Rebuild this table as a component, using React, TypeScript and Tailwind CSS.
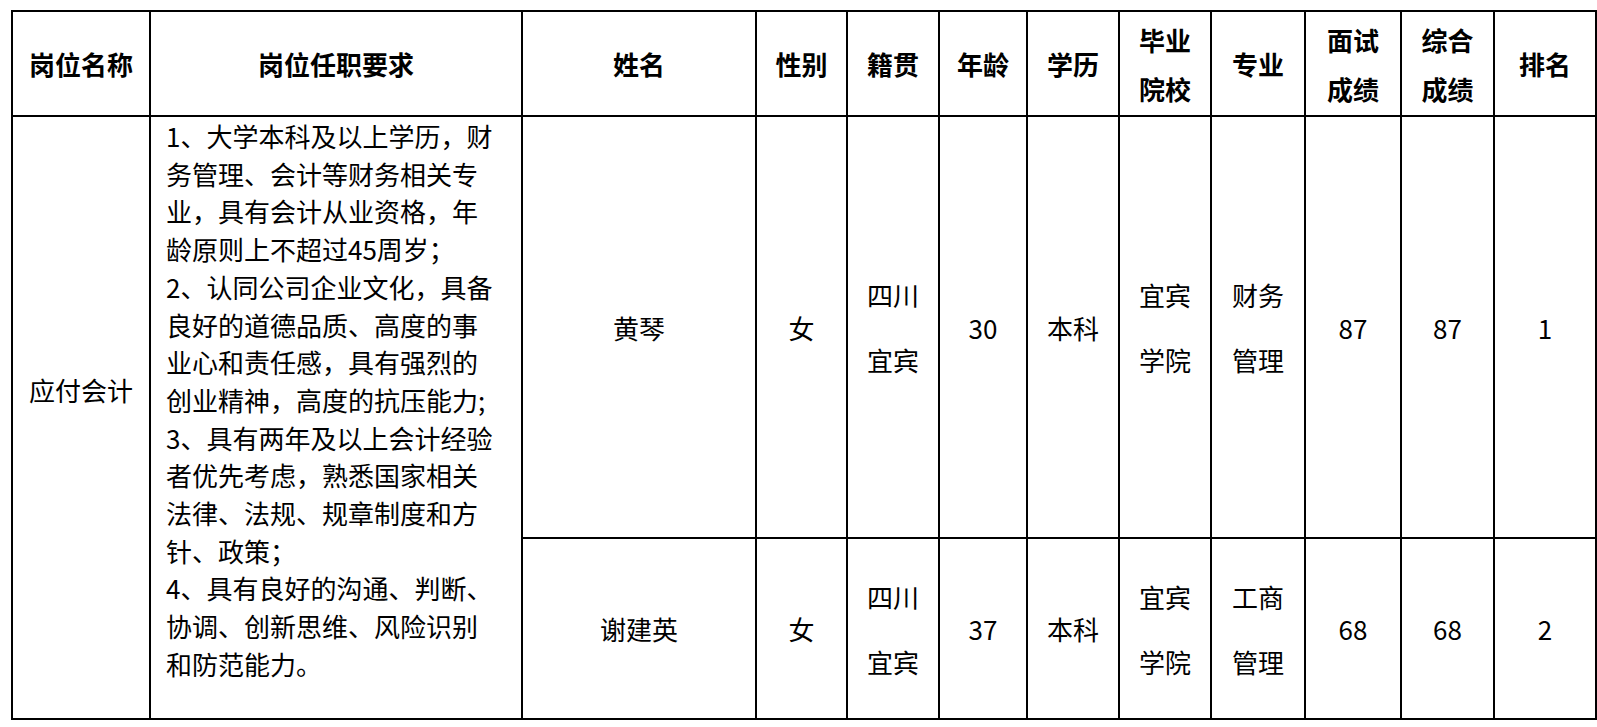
import React from "react";

const req = [
  "1、大学本科及以上学历，财",
  "务管理、会计等财务相关专",
  "业，具有会计从业资格，年",
  "龄原则上不超过45周岁；",
  "2、认同公司企业文化，具备",
  "良好的道德品质、高度的事",
  "业心和责任感，具有强烈的",
  "创业精神，高度的抗压能力;",
  "3、具有两年及以上会计经验",
  "者优先考虑，熟悉国家相关",
  "法律、法规、规章制度和方",
  "针、政策；",
  "4、具有良好的沟通、判断、",
  "协调、创新思维、风险识别",
  "和防范能力。",
];

type Row = {
  name: string;
  sex: string;
  origin: [string, string];
  age: string;
  edu: string;
  school: [string, string];
  major: [string, string];
  interview: string;
  total: string;
  rank: string;
};

const rows: Row[] = [
  {
    name: "黄琴",
    sex: "女",
    origin: ["四川", "宜宾"],
    age: "30",
    edu: "本科",
    school: ["宜宾", "学院"],
    major: ["财务", "管理"],
    interview: "87",
    total: "87",
    rank: "1",
  },
  {
    name: "谢建英",
    sex: "女",
    origin: ["四川", "宜宾"],
    age: "37",
    edu: "本科",
    school: ["宜宾", "学院"],
    major: ["工商", "管理"],
    interview: "68",
    total: "68",
    rank: "2",
  },
];

const cell = "border-2 border-black text-center align-middle p-0";

function Two({ a, b }: { a: string; b: string }) {
  return (
    <div className="leading-[65px]">
      <div>{a}</div>
      <div>{b}</div>
    </div>
  );
}

function HeadTwo({ a, b }: { a: string; b: string }) {
  return (
    <div className="leading-[49px]">
      <div>{a}</div>
      <div>{b}</div>
    </div>
  );
}

export default function App() {
  return (
    <div className="bg-white w-[1597px] h-[727px] overflow-hidden font-['Noto_Sans_CJK_SC','Noto_Sans',sans-serif] text-[26px] text-black">
      <table className="border-collapse table-fixed ml-[11px] mt-[10px] w-[1584px]">
        <colgroup>
          <col className="w-[138px]" />
          <col className="w-[372px]" />
          <col className="w-[234px]" />
          <col className="w-[91px]" />
          <col className="w-[92px]" />
          <col className="w-[88px]" />
          <col className="w-[92px]" />
          <col className="w-[92px]" />
          <col className="w-[94px]" />
          <col className="w-[96px]" />
          <col className="w-[93px]" />
          <col className="w-[102px]" />
        </colgroup>
        <thead>
          <tr className="h-[105px] font-bold">
            <th className={cell}>岗位名称</th>
            <th className={cell}>岗位任职要求</th>
            <th className={cell}>姓名</th>
            <th className={cell}>性别</th>
            <th className={cell}>籍贯</th>
            <th className={cell}>年龄</th>
            <th className={cell}>学历</th>
            <th className={cell}>
              <HeadTwo a="毕业" b="院校" />
            </th>
            <th className={cell}>专业</th>
            <th className={cell}>
              <HeadTwo a="面试" b="成绩" />
            </th>
            <th className={cell}>
              <HeadTwo a="综合" b="成绩" />
            </th>
            <th className={cell}>排名</th>
          </tr>
        </thead>
        <tbody>
          {rows.map((r, i) => (
            <tr key={r.name} className={i === 0 ? "h-[422px]" : "h-[181px]"}>
              {i === 0 && (
                <>
                  <td rowSpan={2} className={`${cell} pb-[57px]`}>
                    应付会计
                  </td>
                  <td
                    rowSpan={2}
                    className="border-2 border-black align-top text-left pl-[15px] pt-0"
                  >
                    <div className="leading-[37.7px] whitespace-nowrap">
                      {req.map((l) => (
                        <div key={l}>{l}</div>
                      ))}
                    </div>
                  </td>
                </>
              )}
              <td className={cell}>{r.name}</td>
              <td className={cell}>{r.sex}</td>
              <td className={cell}>
                <Two a={r.origin[0]} b={r.origin[1]} />
              </td>
              <td className={cell}>{r.age}</td>
              <td className={cell}>{r.edu}</td>
              <td className={cell}>
                <Two a={r.school[0]} b={r.school[1]} />
              </td>
              <td className={cell}>
                <Two a={r.major[0]} b={r.major[1]} />
              </td>
              <td className={cell}>{r.interview}</td>
              <td className={cell}>{r.total}</td>
              <td className={cell}>{r.rank}</td>
            </tr>
          ))}
        </tbody>
      </table>
    </div>
  );
}
